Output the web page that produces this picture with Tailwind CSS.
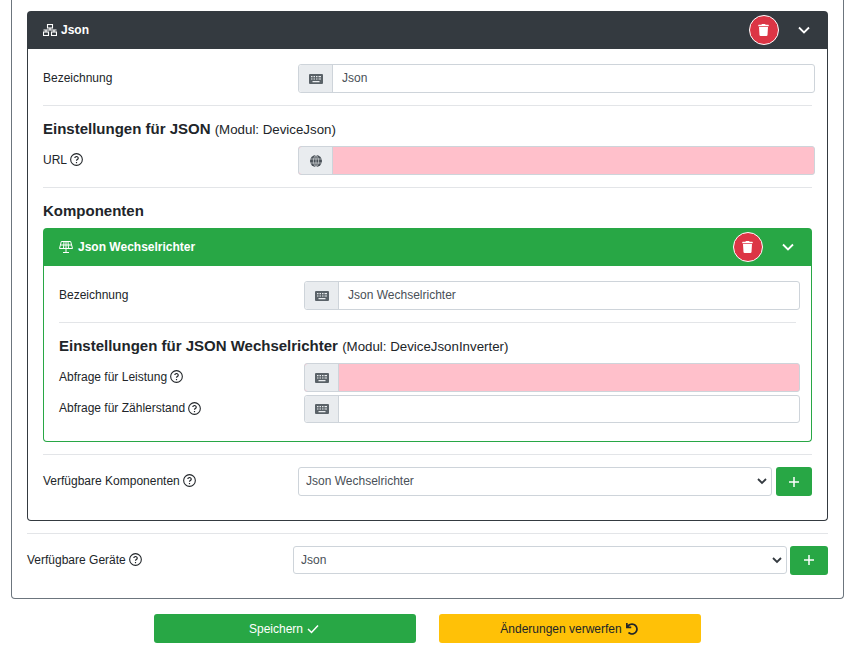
<!DOCTYPE html>
<html lang="de">
<head>
<meta charset="utf-8">
<title>Json</title>
<script src="https://cdn.jsdelivr.net/npm/@tailwindcss/browser@4"></script>
</head>
<body class="bg-white">
<div class="h-[657px] w-[865px] overflow-hidden font-['Liberation_Sans',Arial,sans-serif] text-[12px] text-[#212529]">
  <div class="ml-[11px] w-[833px] rounded-b-[4px] border-x border-b border-[#6c757d] px-[15px] pt-[11px] pb-[24px]">
    <!-- device card -->
    <section>
      <header class="flex h-[38px] items-center rounded-t-[4px] bg-[#343a40] pr-[15px] pl-[16px] font-bold text-white">
        <svg class="h-[12px] w-[14px]" viewBox="0 0 14 12" fill="none" stroke="currentColor" stroke-width="1.1"><rect x="4.500" y=".5" width="5" height="3.500"/><rect x=".5" y="8" width="5" height="3.500"/><rect x="8.500" y="8" width="5" height="3.500"/><path d="M7 4v2M.5 6h13M3 6v2M11 6v2"/></svg>
        <span class="mb-[1px] ml-[4px]">Json</span>
        <button class="ml-auto flex size-[30px] items-center justify-center rounded-full border border-white bg-[#dc3545]">
          <svg class="mr-[1px] h-[12px] w-[11px]" viewBox="0 0 448 512" fill="white"><path d="M432 32H312l-9.4-18.7A24 24 0 0 0 281.1 0H166.8a23.72 23.72 0 0 0-21.4 13.3L136 32H16A16 16 0 0 0 0 48v32a16 16 0 0 0 16 16h416a16 16 0 0 0 16-16V48a16 16 0 0 0-16-16zM53.2 467a48 48 0 0 0 47.9 45h245.8a48 48 0 0 0 47.9-45L416 128H32z"/></svg>
        </button>
        <svg class="mr-[3px] ml-[19px] h-[8px] w-[12px]" viewBox="0 0 12 8" fill="none" stroke="white" stroke-width="1.8"><path d="M1 1.500l5 5 5-5"/></svg>
      </header>
      <div class="rounded-b-[4px] border-x border-b border-[#343a40] px-[15px] pt-[15px] pb-[24px]">
        <div class="flex h-[29px] items-center">
          <label class="mb-[2px] w-[255px] shrink-0">Bezeichnung</label>
          <div class="-mr-[3px] flex h-full flex-1 rounded-[3px] border border-[#ced4da]">
            <span class="flex w-[34px] shrink-0 items-center justify-center rounded-l-[3px] border-r border-[#ced4da] bg-[#e9ecef]">
              <svg class="h-[10px] w-[14px]" viewBox="0 0 14 10" fill="#5a6268"><path fill-rule="evenodd" d="M1 0h12a1 1 0 0 1 1 1v8a1 1 0 0 1-1 1H1a1 1 0 0 1-1-1V1a1 1 0 0 1 1-1zm1 2v1.2h1.500V2zm2.500 0v1.2H6V2zM7 2v1.2h1.500V2zm2.500 0v1.2H12V2zM2 4.400v1.200h1.500V4.400zm2.500 0v1.200H6V4.400zm2.500 0v1.200h1.500V4.400zm2.500 0v1.200H12V4.400zM3.500 7v1.200h7V7z"/></svg>
            </span>
            <span class="flex flex-1 items-center pb-[2px] pl-[9px] text-[#495057]">Json</span>
          </div>
        </div>
        <hr class="my-[12px] border-t border-[#e3e5e8]">
        <h3 class="mt-[14px] mb-[8px] h-[18px] text-[15px] leading-[18px] font-bold">Einstellungen für JSON <span class="text-[13.3px] font-normal">(Modul: DeviceJson)</span></h3>
        <div class="flex h-[29px] items-center">
          <label class="mb-[2px] flex w-[255px] shrink-0 items-center gap-[3px]">URL
            <svg class="size-[13px]" viewBox="0 0 12 12" fill="none" stroke="#212529"><circle cx="6" cy="6" r="5.400"/><path d="M4.400 4.700a1.600 1.500 0 1 1 2.300 1.400c-.5.300-.7.500-.7 1" stroke-width="1.100"/><path d="M6 8.300v1.100" stroke-width="1.100"/></svg>
          </label>
          <div class="-mr-[3px] flex h-full flex-1 rounded-[3px] border border-[#ced4da] bg-[#ffc0cb]">
            <span class="flex w-[34px] shrink-0 items-center justify-center rounded-l-[3px] border-r border-[#ced4da] bg-[#e9ecef]">
              <svg class="size-[12px]" viewBox="0 0 12 12" fill="none"><circle cx="6" cy="6" r="6" fill="#495057"/><path d="M0 4h12M0 8h12M6 0v12M6 0c-3.500 3-3.500 9 0 12M6 0c3.500 3 3.500 9 0 12" stroke="#e9ecef" stroke-width=".6"/></svg>
            </span>
          </div>
        </div>
        <hr class="my-[12px] border-t border-[#e3e5e8]">
        <h3 class="mt-[14px] mb-[8px] h-[18px] text-[15px] leading-[18px] font-bold">Komponenten</h3>

        <!-- component card -->
        <section>
          <header class="flex h-[38px] items-center rounded-t-[4px] bg-[#28a745] pr-[15px] pl-[16px] font-bold text-white">
            <svg class="h-[12px] w-[14px]" viewBox="0 0 14 12" fill="none" stroke="currentColor" stroke-width="1"><path d="M2.300.5h9.400L13.500 7.500H.5zM1.500 4h11M5 .5l-.5 7M9 .5l.5 7M7 .5v11M4 11.500h6"/></svg>
            <span class="mb-[1px] ml-[5px]">Json Wechselrichter</span>
            <button class="ml-auto flex size-[30px] items-center justify-center rounded-full border border-white bg-[#dc3545]">
              <svg class="mr-[1px] h-[12px] w-[11px]" viewBox="0 0 448 512" fill="white"><path d="M432 32H312l-9.4-18.7A24 24 0 0 0 281.1 0H166.8a23.72 23.72 0 0 0-21.4 13.3L136 32H16A16 16 0 0 0 0 48v32a16 16 0 0 0 16 16h416a16 16 0 0 0 16-16V48a16 16 0 0 0-16-16zM53.2 467a48 48 0 0 0 47.9 45h245.8a48 48 0 0 0 47.9-45L416 128H32z"/></svg>
            </button>
            <svg class="mr-[3px] ml-[19px] h-[8px] w-[12px]" viewBox="0 0 12 8" fill="none" stroke="white" stroke-width="1.8"><path d="M1 1.500l5 5 5-5"/></svg>
          </header>
          <div class="rounded-b-[4px] border-x border-b border-[#28a745] px-[15px] pt-[15px] pb-[18px]">
            <div class="flex h-[29px] items-center">
              <label class="mb-[2px] w-[245px] shrink-0">Bezeichnung</label>
              <div class="-mr-[4px] flex h-full flex-1 rounded-[3px] border border-[#ced4da]">
                <span class="flex w-[34px] shrink-0 items-center justify-center rounded-l-[3px] border-r border-[#ced4da] bg-[#e9ecef]">
                  <svg class="h-[10px] w-[14px]" viewBox="0 0 14 10" fill="#5a6268"><path fill-rule="evenodd" d="M1 0h12a1 1 0 0 1 1 1v8a1 1 0 0 1-1 1H1a1 1 0 0 1-1-1V1a1 1 0 0 1 1-1zm1 2v1.2h1.500V2zm2.500 0v1.2H6V2zM7 2v1.2h1.500V2zm2.500 0v1.2H12V2zM2 4.400v1.200h1.500V4.400zm2.500 0v1.200H6V4.400zm2.500 0v1.200h1.500V4.400zm2.500 0v1.200H12V4.400zM3.500 7v1.200h7V7z"/></svg>
                </span>
                <span class="flex flex-1 items-center pb-[2px] pl-[9px] text-[#495057]">Json Wechselrichter</span>
              </div>
            </div>
            <hr class="my-[12px] border-t border-[#e3e5e8]">
            <h3 class="mt-[14px] mb-[8px] h-[18px] text-[15px] leading-[18px] font-bold">Einstellungen für JSON Wechselrichter <span class="text-[13.3px] font-normal">(Modul: DeviceJsonInverter)</span></h3>
            <div class="flex h-[29px] items-center">
              <label class="mb-[2px] flex w-[245px] shrink-0 items-center gap-[3px]">Abfrage für Leistung
                <svg class="size-[13px]" viewBox="0 0 12 12" fill="none" stroke="#212529"><circle cx="6" cy="6" r="5.400"/><path d="M4.400 4.700a1.600 1.500 0 1 1 2.300 1.400c-.5.300-.7.500-.7 1" stroke-width="1.100"/><path d="M6 8.300v1.100" stroke-width="1.100"/></svg>
              </label>
              <div class="-mr-[4px] flex h-full flex-1 rounded-[3px] border border-[#ced4da] bg-[#ffc0cb]">
                <span class="flex w-[34px] shrink-0 items-center justify-center rounded-l-[3px] border-r border-[#ced4da] bg-[#e9ecef]">
                  <svg class="h-[10px] w-[14px]" viewBox="0 0 14 10" fill="#5a6268"><path fill-rule="evenodd" d="M1 0h12a1 1 0 0 1 1 1v8a1 1 0 0 1-1 1H1a1 1 0 0 1-1-1V1a1 1 0 0 1 1-1zm1 2v1.2h1.500V2zm2.500 0v1.2H6V2zM7 2v1.2h1.500V2zm2.500 0v1.2H12V2zM2 4.400v1.200h1.500V4.400zm2.500 0v1.200H6V4.400zm2.500 0v1.200h1.500V4.400zm2.500 0v1.200H12V4.400zM3.500 7v1.200h7V7z"/></svg>
                </span>
              </div>
            </div>
            <div class="mt-[3px] flex h-[28px] items-center">
              <label class="mb-[2px] flex w-[245px] shrink-0 items-center gap-[3px]">Abfrage für Zählerstand
                <svg class="size-[13px]" viewBox="0 0 12 12" fill="none" stroke="#212529"><circle cx="6" cy="6" r="5.400"/><path d="M4.400 4.700a1.600 1.500 0 1 1 2.300 1.400c-.5.300-.7.500-.7 1" stroke-width="1.100"/><path d="M6 8.300v1.100" stroke-width="1.100"/></svg>
              </label>
              <div class="-mr-[4px] flex h-full flex-1 rounded-[3px] border border-[#ced4da]">
                <span class="flex w-[34px] shrink-0 items-center justify-center rounded-l-[3px] border-r border-[#ced4da] bg-[#e9ecef]">
                  <svg class="h-[10px] w-[14px]" viewBox="0 0 14 10" fill="#5a6268"><path fill-rule="evenodd" d="M1 0h12a1 1 0 0 1 1 1v8a1 1 0 0 1-1 1H1a1 1 0 0 1-1-1V1a1 1 0 0 1 1-1zm1 2v1.2h1.500V2zm2.500 0v1.2H6V2zM7 2v1.2h1.500V2zm2.500 0v1.2H12V2zM2 4.400v1.200h1.500V4.400zm2.500 0v1.200H6V4.400zm2.500 0v1.200h1.500V4.400zm2.500 0v1.200H12V4.400zM3.500 7v1.200h7V7z"/></svg>
                </span>
              </div>
            </div>
          </div>
        </section>
        <hr class="my-[12px] border-t border-[#e3e5e8]">
        <div class="flex h-[29px] items-center">
          <label class="mb-[2px] flex w-[255px] shrink-0 items-center gap-[3px]">Verfügbare Komponenten
            <svg class="size-[13px]" viewBox="0 0 12 12" fill="none" stroke="#212529"><circle cx="6" cy="6" r="5.400"/><path d="M4.400 4.700a1.600 1.500 0 1 1 2.300 1.400c-.5.300-.7.500-.7 1" stroke-width="1.100"/><path d="M6 8.300v1.100" stroke-width="1.100"/></svg>
          </label>
          <div class="relative h-full flex-1">
            <select class="h-full w-full appearance-none rounded-[3px] border border-[#ced4da] bg-white pb-[2px] pl-[7px] text-[#495057]"><option>Json Wechselrichter</option></select>
            <svg class="absolute top-[11px] right-[5px] h-[7px] w-[10px]" viewBox="0 0 10 7" fill="none" stroke="#343a40" stroke-width="1.800"><path d="M1 1l4 4 4-4"/></svg>
          </div>
          <button class="ml-[4px] flex h-full w-[36px] items-center justify-center rounded-[3px] bg-[#28a745]">
            <svg class="size-[10px]" viewBox="0 0 10 10" stroke="white" stroke-width="1.500"><path d="M5 0v10M0 5h10"/></svg>
          </button>
        </div>
      </div>
    </section>
    <hr class="my-[12px] border-t border-[#e3e5e8]">
    <div class="flex h-[28px] items-center">
      <label class="mb-[1px] flex w-[266px] shrink-0 items-center gap-[3px]">Verfügbare Geräte
        <svg class="size-[13px]" viewBox="0 0 12 12" fill="none" stroke="#212529"><circle cx="6" cy="6" r="5.400"/><path d="M4.400 4.700a1.600 1.500 0 1 1 2.300 1.400c-.5.300-.7.500-.7 1" stroke-width="1.100"/><path d="M6 8.300v1.100" stroke-width="1.100"/></svg>
      </label>
      <div class="relative h-full flex-1">
        <select class="h-full w-full appearance-none rounded-[3px] border border-[#ced4da] bg-white pl-[7px] text-[#495057]"><option>Json</option></select>
        <svg class="absolute top-[11px] right-[5px] h-[7px] w-[10px]" viewBox="0 0 10 7" fill="none" stroke="#343a40" stroke-width="1.800"><path d="M1 1l4 4 4-4"/></svg>
      </div>
      <button class="ml-[3px] flex h-[29px] w-[38px] items-center justify-center rounded-[3px] bg-[#28a745]">
        <svg class="size-[10px]" viewBox="0 0 10 10" stroke="white" stroke-width="1.500"><path d="M5 0v10M0 5h10"/></svg>
      </button>
    </div>
  </div>
  <div class="mt-[15px] flex justify-center gap-[23px] pr-[10px]">
    <button class="flex h-[29px] w-[262px] items-center justify-center gap-[4px] rounded-[3px] bg-[#28a745] pr-[2px] text-white">Speichern
      <svg class="h-[10px] w-[12px]" viewBox="0 0 12 10" fill="none" stroke="white" stroke-width="1.500"><path d="M1 5l3.500 3.500L11 1.500"/></svg>
    </button>
    <button class="flex h-[29px] w-[262px] items-center justify-center gap-[4px] rounded-[3px] bg-[#ffc107] pr-[2px] text-[#212529]">Änderungen verwerfen
      <svg class="size-[12px]" viewBox="0 0 512 512" fill="#212529"><path d="M212.333 224.333H12c-6.627 0-12-5.373-12-12V12C0 5.373 5.373 0 12 0h48c6.627 0 12 5.373 12 12v78.112C117.773 39.279 184.26 7.47 258.175 8.007c136.906.994 246.448 111.623 246.157 248.532C504.041 393.258 393.12 504 256.333 504c-64.089 0-122.496-24.313-166.51-64.215-5.099-4.622-5.334-12.554-.467-17.42l33.967-33.967c4.474-4.474 11.662-4.717 16.401-.525C170.76 415.336 211.58 432 256.333 432c97.268 0 176-78.716 176-176 0-97.267-78.716-176-176-176-58.496 0-110.28 28.476-142.274 72.333h98.274c6.627 0 12 5.373 12 12v48c0 6.627-5.373 12-12 12z"/></svg>
    </button>
  </div>
</div>
</body>
</html>
